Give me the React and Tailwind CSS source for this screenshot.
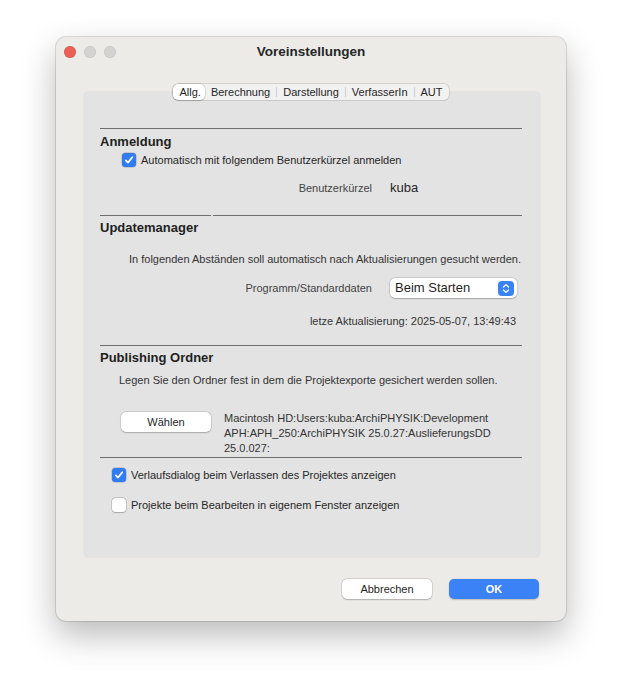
import React from "react";

const font = { fontFamily: '"Liberation Sans", Arial, Helvetica, sans-serif' };

const Check = ({ checked }) =>
  checked ? (
    <span className="w-[14px] h-[14px] rounded-[3.5px] bg-[#2f7cf6] flex items-center justify-center shadow-[0_0_0_0.5px_rgba(0,0,0,0.25)]">
      <svg width="10" height="10" viewBox="0 0 10 10">
        <path d="M1.8 5.3 L4 7.6 L8.3 2.2" fill="none" stroke="white" strokeWidth="1.7" strokeLinecap="round" strokeLinejoin="round" />
      </svg>
    </span>
  ) : (
    <span className="w-[14px] h-[14px] rounded-[3.5px] bg-white shadow-[0_0_0_0.5px_rgba(0,0,0,0.25),0_0.5px_1px_rgba(0,0,0,0.15)]" />
  );

const Line = () => <div className="h-px bg-[#6e6e6e]" />;

const tabs = ["Allg.", "Berechnung", "Darstellung", "VerfasserIn", "AUT"];

export default function App() {
  return (
    <div className="w-[622px] h-[696px] bg-white pt-[37px] pl-[56px]" style={font}>
      {/* Window */}
      <div className="w-[510px] h-[584px] rounded-[10px] bg-[#ecebe8] shadow-[0_0_0_1px_rgba(0,0,0,0.12),0_14px_34px_rgba(0,0,0,0.28)] flex flex-col">
        {/* Title bar */}
        <div className="h-[29px] flex items-center relative">
          <div className="flex gap-[8px] pl-[8px]">
            <span className="w-[12px] h-[12px] rounded-full bg-[#ec5f57] shadow-[inset_0_0_0_0.5px_rgba(0,0,0,0.15)]" />
            <span className="w-[12px] h-[12px] rounded-full bg-[#d3d3d1] shadow-[inset_0_0_0_0.5px_rgba(0,0,0,0.1)]" />
            <span className="w-[12px] h-[12px] rounded-full bg-[#d3d3d1] shadow-[inset_0_0_0_0.5px_rgba(0,0,0,0.1)]" />
          </div>
          <div className="absolute inset-0 flex items-center justify-center text-[13.5px] font-bold text-[#262626] pt-[1px]">
            Voreinstellungen
          </div>
        </div>

        {/* Tab panel */}
        <div className="ml-[28px] mt-[26px] w-[456px] h-[465px] bg-[#e3e3e3] rounded-[4px] shadow-[0_0_0_0.5px_rgba(0,0,0,0.06)] px-[16px] pr-[18px] flex flex-col text-[11px] text-[#262626]">
          {/* Segmented tabs */}
          <div className="-mt-[8px] h-[16px] flex justify-center">
            <div className="flex items-center h-[16px] rounded-[5px] bg-[#f1f1f1] shadow-[0_0_0_0.5px_rgba(0,0,0,0.22)]">
              {tabs.map((t, i) => (
                <React.Fragment key={t}>
                  {i > 1 && <span className="w-px h-[10px] bg-[#cfcfcf]" />}
                  <span
                    className={
                      i === 0
                        ? "h-[16px] px-[6px] pr-[4px] flex items-center bg-white rounded-[5px] shadow-[0_0_0_0.5px_rgba(0,0,0,0.2),0_1px_1px_rgba(0,0,0,0.12)]"
                        : "h-[16px] px-[6px] flex items-center"
                    }
                  >
                    {t}
                  </span>
                </React.Fragment>
              ))}
            </div>
          </div>

          <div className="mt-[28px]"><Line /></div>

          {/* Anmeldung */}
          <div className="mt-[5px] text-[13px] leading-[16px] font-bold text-[#1f1f1f]">Anmeldung</div>
          <div className="mt-[2px] h-[16px] flex items-center gap-[5px] pl-[22px]">
            <Check checked />
            <span>Automatisch mit folgendem Benutzerkürzel anmelden</span>
          </div>
          <div className="mt-[12px] h-[16px] flex items-center gap-[18px]">
            <span className="w-[272px] text-right text-[#444]">Benutzerkürzel</span>
            <span className="text-[13px]">kuba</span>
          </div>

          <div className="mt-[19px] flex gap-[2px]">
            <div className="w-[111px]"><Line /></div>
            <div className="flex-1"><Line /></div>
          </div>

          {/* Updatemanager */}
          <div className="mt-[4px] text-[13px] leading-[16px] font-bold text-[#1f1f1f]">Updatemanager</div>
          <div className="mt-[16px] leading-[14px] text-right pr-[1px] text-[#333]">
            In folgenden Abständen soll automatisch nach Aktualisierungen gesucht werden.
          </div>
          <div className="mt-[12px] h-[20px] flex items-center gap-[18px]">
            <span className="w-[272px] text-right text-[#444]">Programm/Standarddaten</span>
            <div className="w-[127px] h-[20px] bg-white rounded-[5px] shadow-[0_0_0_0.5px_rgba(0,0,0,0.15),0_0.5px_1.5px_rgba(0,0,0,0.2)] flex items-center justify-between pl-[5px] pr-[3px]">
              <span className="text-[13px] text-[#1f1f1f]">Beim Starten</span>
              <span className="w-[16px] h-[15px] rounded-[4px] bg-[#3a82f7] flex items-center justify-center">
                <svg width="8" height="11" viewBox="0 0 8 11">
                  <path d="M1.5 4 L4 1.6 L6.5 4 M1.5 7 L4 9.4 L6.5 7" fill="none" stroke="white" strokeWidth="1.3" strokeLinecap="round" strokeLinejoin="round" />
                </svg>
              </span>
            </div>
          </div>
          <div className="mt-[16px] leading-[14px] text-right pr-[6px] text-[#333]">
            letze Aktualisierung: 2025-05-07, 13:49:43
          </div>

          <div className="mt-[17px]"><Line /></div>

          {/* Publishing Ordner */}
          <div className="mt-[4px] text-[13px] leading-[16px] font-bold text-[#1f1f1f]">Publishing Ordner</div>
          <div className="mt-[7px] leading-[14px] pl-[19px] text-[#333]">
            Legen Sie den Ordner fest in dem die Projektexporte gesichert werden sollen.
          </div>
          <div className="mt-[24px] flex items-start gap-[13px] pl-[21px]">
            <button className="mt-[1px] w-[90px] h-[20px] bg-white rounded-[5px] shadow-[0_0_0_0.5px_rgba(0,0,0,0.15),0_0.5px_1.5px_rgba(0,0,0,0.2)] text-[11px] text-[#262626]">
              Wählen
            </button>
            <div className="leading-[15px] text-[#333]">
              <div>Macintosh HD:Users:kuba:ArchiPHYSIK:Development</div>
              <div>APH:APH_250:ArchiPHYSIK 25.0.27:AuslieferungsDD</div>
              <div>25.0.027:</div>
            </div>
          </div>

          <div className="mt-[1px]"><Line /></div>

          <div className="mt-[9px] h-[16px] flex items-center gap-[5px] pl-[12px]">
            <Check checked />
            <span>Verlaufsdialog beim Verlassen des Projektes anzeigen</span>
          </div>
          <div className="mt-[14px] h-[16px] flex items-center gap-[5px] pl-[12px]">
            <Check />
            <span>Projekte beim Bearbeiten in eigenem Fenster anzeigen</span>
          </div>
        </div>

        {/* Footer buttons */}
        <div className="mt-[22px] flex justify-end gap-[17px] pr-[27px]">
          <button className="w-[90px] h-[20px] bg-white rounded-[5px] shadow-[0_0_0_0.5px_rgba(0,0,0,0.15),0_0.5px_1.5px_rgba(0,0,0,0.2)] text-[11px] text-[#262626]">
            Abbrechen
          </button>
          <button className="w-[90px] h-[20px] bg-[#3b82f6] rounded-[5px] shadow-[0_0.5px_1.5px_rgba(0,0,0,0.2)] text-[11px] font-bold text-white">
            OK
          </button>
        </div>
      </div>
    </div>
  );
}
